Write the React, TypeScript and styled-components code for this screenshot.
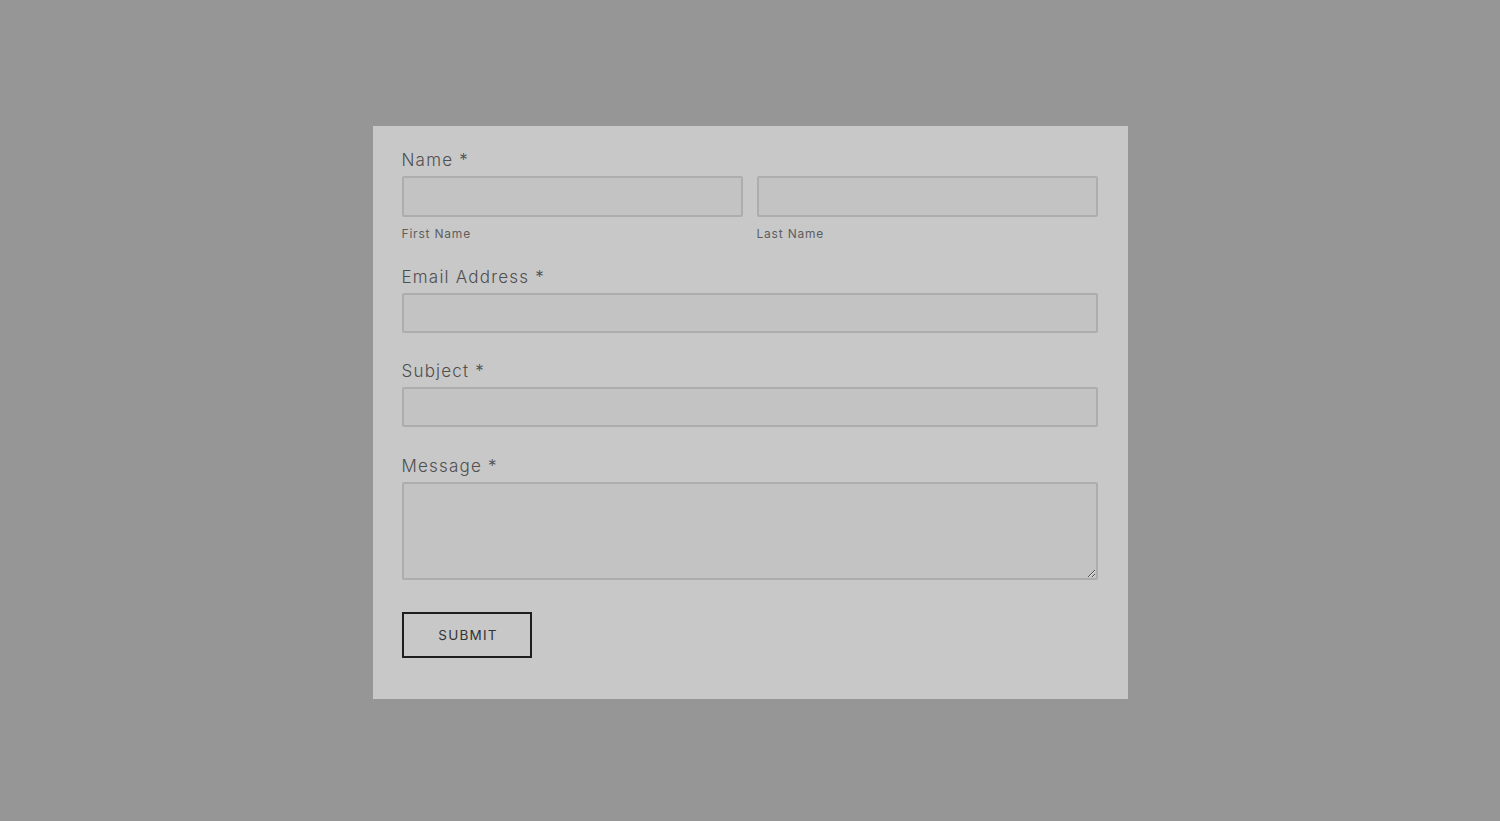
import React from "react";
import styled, { createGlobalStyle } from "styled-components";

const Global = createGlobalStyle`
  html, body { margin: 0; padding: 0; }
  body { background: #969696; font-family: "Inter", "Noto Sans", sans-serif; }
  * { box-sizing: border-box; }
`;

const Page = styled.div`
  width: 1500px;
  height: 821px;
  display: flex;
  justify-content: center;
  padding-top: 126px;
`;

const Card = styled.form`
  width: 755px;
  height: 573px;
  background: #c8c8c8;
  padding: 23px 30px 0 29px;
  display: flex;
  flex-direction: column;
`;

const Field = styled.div<{ $gap?: number }>`
  display: flex;
  flex-direction: column;
  margin-top: ${(p) => p.$gap ?? 0}px;
`;

const Label = styled.label`
  font-size: 17px;
  line-height: 22px;
  font-weight: 300;
  letter-spacing: 1.2px;
  color: #4f4f4f;
  margin-bottom: 5px;
`;

const Row = styled.div`
  display: grid;
  grid-template-columns: 1fr 1fr;
  gap: 14px;
`;

const Col = styled.div`
  display: flex;
  flex-direction: column;
`;

const Input = styled.input<{ $h?: number }>`
  height: ${(p) => p.$h ?? 41}px;
  width: 100%;
  background: #c3c3c3;
  border: 2px solid #adadad;
  border-radius: 2px;
  outline: none;
`;

const Sub = styled.span`
  font-size: 12px;
  line-height: 16px;
  letter-spacing: 0.8px;
  color: #5e5e5e;
  margin-top: 9px;
`;

const Area = styled.textarea`
  height: 98px;
  width: 100%;
  background: #c3c3c3;
  border: 2px solid #adadad;
  border-radius: 2px;
  outline: none;
`;

const Submit = styled.button`
  margin-top: 32px;
  width: 130px;
  height: 46px;
  background: transparent;
  border: 2px solid #1e1e1e;
  font-family: "Inter", "Noto Sans", sans-serif;
  font-size: 13.5px;
  letter-spacing: 1.2px;
  color: #333;
  padding: 0 0 0 3px;
`;

export default function App() {
  return (
    <Page>
      <Global />
      <Card onSubmit={(e) => e.preventDefault()}>
        <Field>
          <Label>Name *</Label>
          <Row>
            <Col>
              <Input />
              <Sub>First Name</Sub>
            </Col>
            <Col>
              <Input />
              <Sub>Last Name</Sub>
            </Col>
          </Row>
        </Field>
        <Field $gap={24}>
          <Label>Email Address *</Label>
          <Input $h={40} />
        </Field>
        <Field $gap={27}>
          <Label>Subject *</Label>
          <Input $h={40} />
        </Field>
        <Field $gap={28}>
          <Label>Message *</Label>
          <Area />
        </Field>
        <div>
          <Submit type="submit">SUBMIT</Submit>
        </div>
      </Card>
    </Page>
  );
}
